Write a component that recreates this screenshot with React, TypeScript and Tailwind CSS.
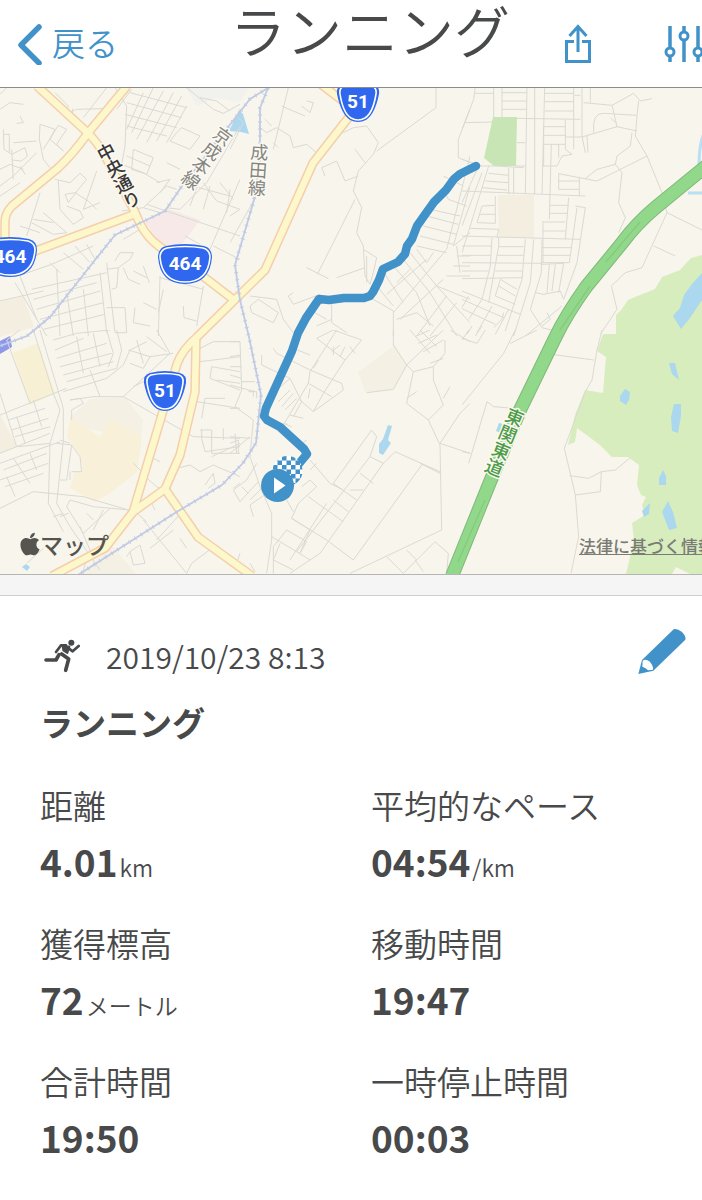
import React from "react";
import { FaApple } from "react-icons/fa";

const BLUE = "#4192c9";

type Tile = { x: number; y: number; streets: string[] };

/* Side streets, kept per map tile at three units to the pixel. */
const tiles: Tile[] = [
  {
    x: 0,
    y: 86,
    streets: [
      "M0 25L20 5M0 70L30 50L70 55M60 90L70 110L50 112M165 20L205 60L195 85L230 70L310 68L345 40M218 85V68",
      "M10 130L12 190L35 205L75 185L82 210L65 225L35 222M12 145H28V200M40 170L110 165M0 250L30 235L70 250M0 300L40 270L110 200M35 190L40 280M60 240L75 265",
      "M120 115L165 130L150 160L190 195L170 175L200 130L175 118L130 190M120 115L118 160L130 220L150 245M0 330L60 290",
      "M320 5L250 95M345 5L380 60L375 180L365 235M395 10L350 70M430 20L380 130M460 5L395 140M490 15L410 160M520 20L440 170M545 30L470 165M560 60L500 170M390 20L560 65M380 50L545 95M375 85L530 125M380 120L500 150",
      "M560 5L640 70L670 82L720 55M600 35L650 45L690 75M530 140L545 125L600 150L570 190L510 165ZM400 190L460 215L440 265L395 250ZM380 210L450 240M365 235L430 260L480 290M500 230L540 250M470 290L510 280L480 320M540 290L690 330M600 280L570 360M630 300L610 370M690 310L680 380",
      "M720 120L620 290L540 370L500 365M430 365L500 300L530 310M440 355L720 450M720 280L600 560M480 380L430 365L365 375M610 290L650 345L720 370M660 290L700 340",
      "M120 320L80 450M165 280L210 290L240 262L260 280L235 310L205 350L195 325L225 320L265 345L290 370M175 285L180 370L220 415L250 395L240 375L200 360M290 255L250 370L300 350M160 410L100 400M130 380L200 440L160 445L95 410M60 420L120 440",
      "M55 570L155 535L280 480M45 590L140 750M60 570L110 700M95 610L320 560M100 640L290 590M110 670L300 615M120 700L310 650M130 730L315 685M150 530L180 560M190 500L250 550M225 480L270 530M260 475L285 520M170 550L180 750M200 620L220 750M250 610L265 750M300 560L320 740M320 530L345 740M345 740L380 740L375 665L320 665M320 550L355 545L350 605L335 610",
      "M345 525L360 500L400 500L390 520L355 545M370 545L385 580L420 595M400 555L440 575M430 540L448 590M480 570L475 750M480 575L610 610M610 600L590 720M550 660L552 695L590 705M405 665L400 710L450 720M430 650L470 670M475 680L490 610M0 645L130 615M640 480L720 520M555 450L600 475M420 430L370 460",
    ],
  },
  {
    x: 230,
    y: 86,
    streets: [
      "M155 60L225 90M175 5L130 190M230 45L250 50L240 80L215 60M85 120L110 140L140 125L180 150L190 185L230 175L260 200M105 100L125 120M130 170L145 185M0 470L90 310M0 390L30 370M0 190L40 110L20 90",
      "M340 140L370 125L410 120L445 170L430 205L385 255L370 315L395 365L380 440L400 480L405 570L420 595M618 5V65L440 195M375 190L405 230M285 270L275 245L320 225L345 285L385 270M375 340L262 565M230 545L295 578M320 575L405 545M400 490L440 515L430 560L420 595M410 510V590M60 630L140 640L160 700L190 740M60 660L85 640L145 680L130 710L65 680ZM175 630L190 655L270 625M175 630L190 620",
      "M720 70L685 160V215L720 230M255 680L290 700M305 655V710L350 740M260 720L305 700M430 640L490 675V750M640 270L700 300M600 370L690 390M590 390L685 415M580 420L680 445M570 450L670 475M560 480L650 500M640 310L655 340L710 360M720 210L650 490L490 680M720 300L670 480L720 440M680 510H720M670 540H720M650 570H720M680 480L690 560",
      "M520 520L600 620L680 750M490 540L560 620L600 720M465 565L520 650M440 600L490 660M540 500L620 600L720 640M500 590L540 550M470 625L590 520M510 700L640 580M560 750L650 630M600 750L680 650M560 490L590 530L610 500M620 600L720 710M500 700L560 680L610 720",
    ],
  },
  {
    x: 462,
    y: 86,
    streets: [
      "M40 0L35 40L0 130M10 110L90 108M95 0V95M120 0V95M195 0L190 325M218 0V325M248 0L240 325M120 20H195M120 45H193M120 70H193M40 22H95M165 97L355 100M248 22H335M248 47H335M248 75H335M245 122H310M245 148H310M245 175H310M245 122V240M310 100V190M335 0V190M360 0V150M385 0V50M338 28H355",
      "M310 153L360 153L465 122L525 135M360 150L370 200M375 150L378 200M310 190L330 205L300 210L285 240H240M268 175L262 400M165 170H190M160 240H190M290 175V215M290 263L405 285L555 210M290 263V310M290 285H352M290 310H352M352 275V330M365 50L450 58L515 22L535 45L570 38M450 58L465 122M395 140Q390 80 425 82L525 88L530 45M445 95L460 110M510 140L505 180L465 210L460 235L405 250L370 278M525 90L520 150L555 210L600 320L615 380L540 545L490 560L448 600L465 670L415 745M460 235L480 260L470 350L490 395L470 440M615 380L720 432M575 480L640 510",
      "M0 220L60 240L100 240L185 245M80 240L0 500M60 260L0 420M50 240L0 350M80 262L140 268M70 285L138 290M60 305L135 312M140 245V325M155 245V325M0 315L370 330M60 360L100 358V330M55 385H100M45 410L100 412V360M45 410L60 360M25 427L110 430L105 455M0 450L355 460M320 335L310 460M262 358H320M262 382H315M243 408H310M243 435H310M243 405V530M340 360L370 365L345 530L305 640L295 615L245 625L220 620",
      "M345 365L322 530L240 530M240 485H330M240 508H325M190 460L180 580L130 735M215 460L205 590L155 750M240 460L238 560L205 670L240 725L300 740M240 535L305 532L290 620M262 535L255 620M280 535L270 615M240 720L265 700L255 680M110 455V480L80 650M90 455L85 540L60 640M0 480H90M0 508H85M0 530L240 532M0 555H80M0 578L180 575M110 482H185M105 508H185M100 555H180M115 580L165 610M110 600L160 630M115 580L100 630L160 655M0 615L175 685M0 640L125 695M0 668L100 715M20 630L0 665M60 640L20 700M90 660L45 740M125 680L120 700L95 725M30 720L15 745M60 720L40 750M140 670L100 745M485 440L350 600M300 660L190 750",
    ],
  },
  {
    x: 0,
    y: 330,
    streets: [
      "M120 0L190 235V330L170 520L210 590L300 720M100 0L160 190L180 240L150 340L145 520L190 605M160 30L230 10L330 0M165 60L250 25M170 85L320 40M180 110L335 70M190 135L340 95M200 155L350 115L365 60L350 0M190 185L320 145L370 105L390 60L440 35M320 0L340 70L325 110M230 20L250 130M270 120L300 200M280 10L300 110M385 60L450 80L520 70M390 100L430 115L450 80M410 30L430 100M440 20L500 65M470 0L510 70L370 200M480 130L400 170",
      "M0 255L100 215L200 175M25 270L135 235M35 300L145 265M45 320L150 290M0 370L150 310M55 350L150 340M0 400L180 335M10 420L140 370M0 450L145 400M15 470L130 430M60 0L20 30L90 220M0 190L50 350M100 210L125 290M50 260L75 340M90 370L110 420M40 385L90 460M20 440L45 500M0 535L100 485L150 490L250 500L385 540M180 450L200 450L215 345L170 340M215 345L240 380L245 425L215 425M210 425V450M180 330L210 340",
      "M210 210L240 205L250 220L215 240V270M210 210L280 200L370 200L580 320L720 325M590 215L720 235M605 265L615 205L675 205M600 95L720 80M600 55L640 35H720M635 110L720 125M650 150L720 160M635 110L630 145L720 180M600 300H635V370H720M605 300V325L615 365L720 350M635 380L720 340M670 295V330M530 415L570 405L600 425L640 405L720 440M615 465L640 430L645 460L625 475M700 475L720 460M430 435L470 470L490 480M460 385L480 395M440 440L400 400",
      "M210 510L200 530L250 610L330 535M210 510L280 530L390 540M260 550L280 570M310 540L280 600M180 560L205 550M80 700L130 655M160 560L190 550M240 590L270 660L250 720M400 540L440 575M455 520L465 540M430 570L560 730M390 665L420 645L435 700L400 705ZM390 665L380 680M470 630L520 575L550 540M540 625L560 655M450 655L520 600M560 730L575 700L635 655",
    ],
  },
  {
    x: 230,
    y: 330,
    streets: [
      "M0 35H30L35 180L15 230L70 270L60 380L90 470L125 550V630L110 730M0 80L30 75M0 110H35M0 135L35 145M0 165L75 185M35 155H75M55 185L80 185V205M70 180V200M0 320L60 325M0 340L25 330V370M15 310L20 370M0 370L60 320M0 235L20 235M10 480L30 515L85 455M10 480L50 450L80 400M35 470L55 490M60 510L100 470M70 560L60 525L110 490",
      "M260 25L310 0L395 30L345 90L280 190L250 245L210 210M260 25L345 90M320 0L240 125L235 160L160 285M240 75L190 55M130 55L140 70L240 120L335 160L340 180L250 245M235 160L305 200M250 115L265 90M305 65L330 45M310 75V50M330 80L345 50M360 50L375 70M95 75V105L180 145L215 215M180 145L130 190M145 215L180 180M155 230L190 190M165 240L200 205M180 255L220 265M160 280L185 290M150 300L170 280M240 175L235 205M215 215L190 260M210 345L230 330",
      "M490 0V45L530 105L490 178L410 188M530 105L550 125L530 220L595 270L630 345L635 600L360 730M530 105L640 0M550 125L610 110L645 70V30M610 110V150L640 225L595 270M640 205L660 170M540 0L600 70M570 0L620 50M555 20L600 0M565 40L620 15M580 65L640 30M660 0L720 35M600 100L640 85M530 205L560 185M720 220L690 250L630 340L720 370",
      "M310 460L425 300L440 320L420 380L200 665M420 380L460 400L270 670M460 400L495 365L630 425M390 430L430 460M360 480L400 480M310 460L380 510M240 390L300 460L340 480M205 520L260 470L240 450L215 470M235 500L340 575M185 565L290 630L370 690M205 520L185 565L240 600L210 670M310 510L355 545M290 520L180 690M575 405L370 690M630 430L570 400",
      "M125 620L200 665L240 690L180 730M170 600L230 635L210 670M170 600L130 650V730M150 640L130 690L190 720M470 680L520 730L615 635L655 670M530 660L560 690M555 690L580 725M270 670L240 690M655 670L650 730M170 510L190 545M240 420L260 400M30 670L20 700M60 700L75 725",
    ],
  },
  {
    x: 462,
    y: 330,
    streets: [
      "M0 225L125 70L160 0M20 400L75 215L95 230L155 235L235 75M0 365L25 370M0 25L45 40L70 0M20 0L0 30M145 40L225 0M270 73L395 90M420 0L405 60L390 150L370 185L307 355L340 495L350 620L327 730M323 437L380 445L418 425L415 485L340 495M418 425L460 420L505 383",
    ],
  },
];

const mainRoads = [
  "M37 86L88 133Q98 143 105 156L135 212Q143 235 160 247L200 274L234 300",
  "M127 86L88 133Q73 154 58 168L12 206Q5 213 5 222V252",
  "M135 214L30 253",
  "M318 82L352 108",
  "M356 108L313 163L265 270L197 337Q182 350 177 364L133 512L105 548L52 576",
  "M196 340L195 392L180 455L165 489L133 512",
  "M165 489L198 537L252 576",
];

const railways = [
  "M268 88L250 99L232 122L182 186L165 211L115 235L95 260L50 317L27 336L0 346",
  "M268 88L260 108V160L254 200L235 265L240 300L249 337L261 395L256 443L243 463L222 485L175 513L78 575",
];

const motorway =
  "M710 163L655 208Q636 224 622 243L586 287Q566 315 555 338L520 410L490 482L452 576";

const runningRoute =
  "M476 166L460 174L454 179L446 190L434 202L424 216L417 226L412 239L407 246L405 254L398 262L383 269L379 280L373 292L370 296L364 298L344 298L329 300L319 299L306 318L298 333L292 351L276 386L266 408L264 416L267 420L280 427L304 449L307 454L297 466";

const ponds = [
  "M702 273L692 284L684 295L680 308L673 316L681 329L690 318L702 300Z",
  "M669 363L675 363L679 380L672 374Z",
  "M620 396L625 389L630 392L629 400L626 405L620 401Z",
  "M674 404L681 404L681 416L678 433L672 431L671 417Z",
  "M659 478L663 470L666 476V485H659Z",
  "M642 511L650 503L649 514L644 517Z",
  "M662 512L668 501L673 512L677 528L669 530Z",
  "M388 425L392 426L388 440L391 443L383 455L379 453L379 444L383 439Z",
  "M499 423L503 424L501 433L496 431Z",
  "M239 110L243 114L249 134L241 132L229 131Z",
  "M26 564L30 567L27 571L22 567Z",
];

function Shield({ x, y, label, wide }: { x: number; y: number; label: string; wide?: boolean }) {
  const outer = wide
    ? "M-19 -18Q0 -22 19 -18Q27 -16 27 -7Q25 20 0 20Q-25 20 -27 -7Q-27 -16 -19 -18Z"
    : "M-15 -18Q0 -22 15 -18Q22 -16 21 -8Q17 12 8 18Q0 22 -8 18Q-17 12 -21 -8Q-22 -16 -15 -18Z";
  const inner = wide
    ? "M-18 -16Q0 -19 18 -16Q25 -14 25 -7Q23 18 0 18Q-23 18 -25 -7Q-25 -14 -18 -16Z"
    : "M-14 -16Q0 -19 14 -16Q19 -14 18 -8Q15 11 7 16Q0 20 -7 16Q-15 11 -18 -8Q-19 -14 -14 -16Z";
  return (
    <g transform={`translate(${x} ${y})`}>
      <path d={outer} fill="#2f68ee" />
      <path d={inner} fill="#2f68ee" stroke="#fff" strokeWidth="1.6" />
      <text y="6" textAnchor="middle" fill="#fff" className="font-['Roboto','Liberation_Sans',sans-serif] text-[19px] font-bold">
        {label}
      </text>
    </g>
  );
}

function StreetName({ x, y, angle, color, bold, children }: { x: number; y: number; angle: number; color: string; bold?: boolean; children: string }) {
  return (
    <text
      transform={`translate(${x} ${y}) rotate(${angle})`}
      fill={color}
      stroke="#fbf9f2"
      strokeWidth="3"
      paintOrder="stroke"
      strokeLinejoin="round"
      className={bold ? "text-[18px] font-medium [writing-mode:vertical-rl]" : "text-[18px] [writing-mode:vertical-rl]"}
    >
      {children}
    </text>
  );
}

function RouteMap() {
  return (
    <svg viewBox="0 88 702 486" preserveAspectRatio="xMidYMid slice" className="block h-full w-full" role="img" aria-label="ルートマップ">
      <defs>
        <pattern id="checks" x="273" y="456" width="9" height="9" patternUnits="userSpaceOnUse">
          <rect width="9" height="9" fill="#fff" />
          <rect width="4.5" height="4.5" fill={BLUE} />
          <rect x="4.5" y="4.5" width="4.5" height="4.5" fill={BLUE} />
        </pattern>
      </defs>
      <rect x="0" y="88" width="702" height="486" fill="#f8f5ec" />

      <path d="M185 86L197 106L216 98L240 102L250 86Z" fill="#f1f1ee" />
      <path d="M145 222L166 208L200 220L182 244L162 246Z" fill="#f6e9e8" />
      <path d="M0 302L23 296L34 327L0 337ZM498 195H534V238H499ZM0 415L17 446L0 453Z" fill="#f4eee1" />
      <path d="M358 372L395 345L407 367L392 390L365 392ZM70 417L90 399L125 397L143 420L141 440L70 425ZM78 574L113 547L136 574Z" fill="#f4f0e4" />
      <path d="M13 353L38 343L55 393L30 405Z" fill="#f8f0d4" />
      <path d="M70 417L100 437L111 418L142 437L137 472L110 493L95 502L70 488L75 472L83 471L80 455L67 437Z" fill="#f8f0d9" />
      <path d="M493 117H517L516 166H494L484 158Z" fill="#c8e5b5" />
      <path
        d="M702 255L691 258L680 270L662 277L655 289L640 295L628 300L622 309L616 315V334L603 334L597 351L606 357L603 393L585 390L575 415L568 445L575 442L577 428L600 445L612 457L628 457L639 465L637 485L641 495L646 497L642 505L645 515L632 523L634 540L626 574H672L676 567L690 574H702Z"
        fill="#d7edbe"
      />
      <g fill="#abd8ee">
        {ponds.map((d) => (
          <path key={d} d={d} />
        ))}
      </g>
      <path d="M704 133Q699 145 699 164M688 193H704" fill="none" stroke="#b9dff2" strokeWidth="3" />
      <path d="M0 341L10 336L12 347L0 354Z" fill="#8c98ea" />

      {tiles.map((t) => (
        <svg key={`${t.x}-${t.y}`} x={t.x} y={t.y} width="240" height="250" viewBox="0 0 720 750">
          {t.streets.map((d) => (
            <path key={d} d={d} fill="none" stroke="#dadad3" strokeWidth="3" />
          ))}
        </svg>
      ))}

      <g fill="none" strokeLinejoin="round">
        {mainRoads.map((d) => (
          <path key={d} d={d} stroke="#f5cfab" strokeWidth="9.5" />
        ))}
        {mainRoads.map((d) => (
          <path key={d} d={d} stroke="#fcf8cc" strokeWidth="6.5" />
        ))}
        {railways.map((d) => (
          <g key={d} stroke="#c0cae4">
            <path d={d} strokeWidth="1.8" />
            <path d={d} strokeWidth="4" strokeDasharray="1 6" />
          </g>
        ))}
        <path d={motorway} stroke="#7fb87c" strokeWidth="14" />
        <path d={motorway} stroke="#92d88a" strokeWidth="12" />
        <path d="M640 222L606 262M590 286L560 330M485 500L458 562" stroke="#86cb80" strokeWidth="1.5" />
      </g>

      <StreetName x={102} y={144} angle={-28} color="#383838" bold>中央通り</StreetName>
      <StreetName x={228} y={129} angle={36} color="#85857f">京成本線</StreetName>
      <StreetName x={260} y={143} angle={4} color="#85857f">成田線</StreetName>
      <StreetName x={518} y={409} angle={22} color="#4d9c48" bold>東関東道</StreetName>

      <Shield x={358} y={102} label="51" />
      <Shield x={165} y={391} label="51" />
      <Shield x={185} y={264} label="464" wide />
      <Shield x={10} y={257} label="464" wide />

      <path d={runningRoute} fill="none" stroke={BLUE} strokeWidth="8.5" strokeLinecap="round" strokeLinejoin="round" />
      <circle cx="287.5" cy="471" r="15" fill="url(#checks)" />
      <circle cx="277.5" cy="485.5" r="16.5" fill={BLUE} />
      <path d="M274 477.500L285.500 485.500L274 493.500Z" fill="#fff" />
    </svg>
  );
}

function RunnerIcon() {
  return (
    <svg viewBox="0 0 108 102" className="h-[34px] w-9 shrink-0" fill="none" stroke="#48494a" strokeLinecap="round" strokeLinejoin="round" aria-hidden="true">
      <circle cx="82" cy="11" r="9" fill="#48494a" stroke="none" />
      <path d="M66 19H51L36 39" strokeWidth="8" />
      <path d="M74 28L86 37L104 21" strokeWidth="8" />
      <path d="M56 20L76 23L70 42L58 34Z" fill="#48494a" strokeWidth="6" />
      <path d="M53 45L74 60L65 94" strokeWidth="11" />
      <path d="M45 47L36 63H6" strokeWidth="11" />
    </svg>
  );
}

function PencilIcon() {
  return (
    <svg viewBox="0 0 144 138" className="h-[46px] w-12" aria-hidden="true">
      <path d="M107 4Q116 0 131 11Q145 25 142 35L46 128L1 138L12 96Z" fill={BLUE} />
      <path d="M14 98Q23 92 34 100Q47 113 45 125L30 127Q24 119 13 116Z" fill="#fff" />
    </svg>
  );
}

const stats = [
  { label: "距離", value: "4.01", unit: "km" },
  { label: "平均的なペース", value: "04:54", unit: "/km" },
  { label: "獲得標高", value: "72", unit: "メートル" },
  { label: "移動時間", value: "19:47" },
  { label: "合計時間", value: "19:50" },
  { label: "一時停止時間", value: "00:03" },
];

export default function App() {
  return (
    <div className="min-h-screen overflow-x-hidden bg-white font-['Noto_Sans_CJK_JP',sans-serif] text-[#48494a]">
      <header className="flex h-[88px] items-center border-b border-[#8b8b89] bg-white text-[#4192c9]">
        <button type="button" className="mr-auto flex items-center gap-2 pl-4 text-[33px] leading-[44px] font-[350]">
          <svg viewBox="0 0 28 42" className="h-[42px] w-7" fill="none" stroke="currentColor" strokeWidth="5.500" strokeLinecap="round" strokeLinejoin="round" aria-hidden="true">
            <path d="M23 4L5 22L23 40" />
          </svg>
          <span className="-mt-1">戻る</span>
        </button>
        <h1 className="self-start text-[56px] leading-[58px] font-[350] whitespace-nowrap text-[#48494a]">ランニング</h1>
        <button type="button" aria-label="共有" className="ml-[54px]">
          <svg viewBox="0 0 28 40" className="h-10 w-7" fill="none" stroke="currentColor" strokeWidth="3" aria-hidden="true">
            <path d="M10 17.500H2.500V37.500H25.500V17.500H18" />
            <path d="M14 28V3M5.500 12L14 2.500L22.500 12" />
          </svg>
        </button>
        <button type="button" aria-label="設定" className="ml-[72px]">
          <svg viewBox="0 0 38 38" className="h-[38px] w-[38px]" fill="none" stroke="currentColor" strokeWidth="3" aria-hidden="true">
            <path d="M6 1V23M6 31V37M20 1V7M20 15V37M34 1V23M34 31V37" strokeWidth="3.500" />
            <circle cx="6" cy="27" r="4" />
            <circle cx="20" cy="11" r="4" />
            <circle cx="34" cy="27" r="4" />
          </svg>
        </button>
      </header>

      <section className="relative h-[487px] overflow-hidden border-b border-[#b5b5b3]">
        <RouteMap />
        <div className="absolute bottom-3 left-5 flex items-center text-[23px] leading-9 font-medium text-[#55544f]">
          <FaApple className="h-[26px] w-5" aria-hidden="true" />
          <span>マップ</span>
        </div>
        <a href="#legal" className="absolute right-[-13px] bottom-4 text-[17px] leading-6 font-medium whitespace-nowrap text-[#7b7b75] underline">
          法律に基づく情報
        </a>
      </section>

      <div className="h-[21px] border-b border-[#cfcfcf] bg-[#f5f5f5]" />

      <main className="pt-8 pl-10">
        <div className="flex h-14 items-center pl-1">
          <RunnerIcon />
          <time className="ml-[26px] text-[30px] leading-[44px] font-[350]">2019/10/23 8:13</time>
          <button type="button" aria-label="編集" className="mr-4 ml-auto self-start">
            <PencilIcon />
          </button>
        </div>
        <h2 className="mt-[14px] text-[33px] leading-[48px] font-bold">ランニング</h2>
        <dl className="mt-[35px] grid grid-cols-2 gap-y-[26px]">
          {stats.map((s) => (
            <div key={s.label}>
              <dt className="text-[33px] leading-[48px] font-[350] whitespace-nowrap">{s.label}</dt>
              <dd className="flex h-16 items-baseline gap-[2px] leading-[64px]">
                <span className="text-[37px] font-bold">{s.value}</span>
                {s.unit && <span className="text-[23px] font-[350]">{s.unit}</span>}
              </dd>
            </div>
          ))}
        </dl>
      </main>
    </div>
  );
}
